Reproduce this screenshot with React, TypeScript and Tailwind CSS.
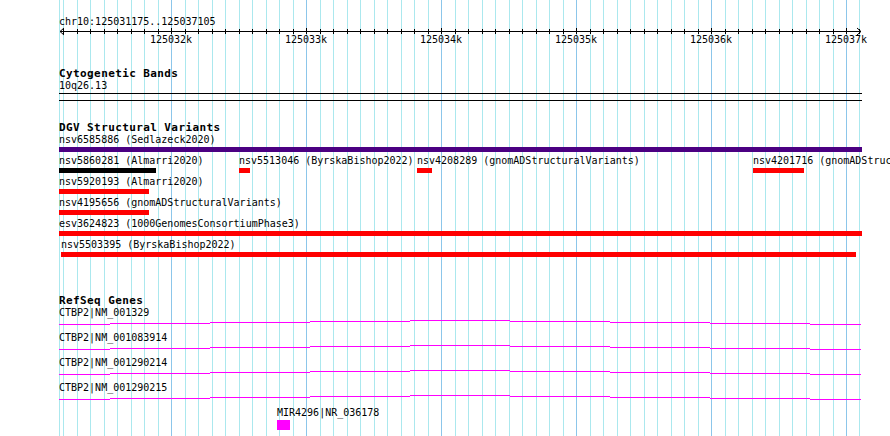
import React from "react";

// pixel positions of the 100bp grid (view starts at 125031175, 135px per kb)
const gridXs: { x: number; major: boolean }[] = [];
for (let k = 0; k < 60; k++) {
  gridXs.push({ x: Math.min(Math.floor(63.5 + 13.5 * k), 859), major: (k - 8) % 10 === 0 });
}

const majorTicks = [
  { x: 171, label: "125032k" },
  { x: 306, label: "125033k" },
  { x: 441, label: "125034k" },
  { x: 576, label: "125035k" },
  { x: 711, label: "125036k" },
  { x: 846, label: "125037k" },
];

type Feature = { name: string; start: number; end: number; color: string };

const dgvRows: Feature[][] = [
  [{ name: "nsv6585886 (Sedlazeck2020)", start: 59, end: 862, color: "bg-[#4b0082]" }],
  [
    { name: "nsv5860281 (Almarri2020)", start: 59, end: 156, color: "bg-black" },
    { name: "nsv5513046 (ByrskaBishop2022)", start: 239, end: 250, color: "bg-[#ff0000]" },
    { name: "nsv4208289 (gnomADStructuralVariants)", start: 417, end: 432, color: "bg-[#ff0000]" },
    { name: "nsv4201716 (gnomADStructuralVariants)", start: 753, end: 804, color: "bg-[#ff0000]" },
  ],
  [{ name: "nsv5920193 (Almarri2020)", start: 59, end: 149, color: "bg-[#ff0000]" }],
  [{ name: "nsv4195656 (gnomADStructuralVariants)", start: 59, end: 149, color: "bg-[#ff0000]" }],
  [{ name: "esv3624823 (1000GenomesConsortiumPhase3)", start: 59, end: 862, color: "bg-[#ff0000]" }],
  [{ name: "nsv5503395 (ByrskaBishop2022)", start: 61, end: 856, color: "bg-[#ff0000]" }],
];

const transcripts = ["CTBP2|NM_001329", "CTBP2|NM_001083914", "CTBP2|NM_001290214", "CTBP2|NM_001290215"];

// the intron "hat" line rises 1px every 100px toward the middle
const hatSegments = [
  [59, 110, 5],
  [110, 210, 4],
  [210, 310, 3],
  [310, 410, 2],
  [410, 510, 1],
  [510, 610, 2],
  [610, 710, 3],
  [710, 810, 4],
  [810, 861, 5],
];

function TrackTitle({ children, className = "" }: { children: React.ReactNode; className?: string }) {
  return (
    <div className={`pl-[59px] h-[12px] text-[11px] leading-[12px] font-bold tracking-[0.4px] whitespace-nowrap ${className}`}>
      {children}
    </div>
  );
}

function Ruler() {
  return (
    <div className="pt-[16px]">
      <div className="pl-[59px] h-[12px] whitespace-nowrap">chr10:125031175..125037105</div>
      <svg width={890} height={6} className="block overflow-visible" shapeRendering="crispEdges">
        <line x1={60} y1={3.5} x2={861} y2={3.5} stroke="#000" />
        {gridXs.map((g) => (
          <line key={g.x} x1={g.x + 0.5} y1={g.major ? 0 : 1} x2={g.x + 0.5} y2={6} stroke="#000" />
        ))}
        <polyline points="64,0 60,3.5 64,7" fill="none" stroke="#000" shapeRendering="auto" />
        <polyline points="857,0 861,3.5 857,7" fill="none" stroke="#000" shapeRendering="auto" />
      </svg>
      <div className="relative h-[12px]">
        {majorTicks.map((t) => (
          <span key={t.x} className="absolute top-0 whitespace-nowrap" style={{ left: t.x - 21 }}>
            {t.label}
          </span>
        ))}
      </div>
    </div>
  );
}

function DgvRow({ features }: { features: Feature[] }) {
  return (
    <div className="relative h-[21px]">
      {features.map((f) => (
        <div key={f.name} className="absolute top-0 flex flex-col" style={{ left: f.start }}>
          <span className="h-[12px] whitespace-nowrap">{f.name}</span>
          <div className={`mt-[1px] h-[5px] ${f.color}`} style={{ width: f.end - f.start }} />
        </div>
      ))}
    </div>
  );
}

function Transcript({ name }: { name: string }) {
  return (
    <div className="h-[25px]">
      <div className="pl-[59px] h-[12px] whitespace-nowrap">{name}</div>
      <svg width={890} height={13} className="block" shapeRendering="crispEdges">
        {hatSegments.map(([x1, x2, y]) => (
          <rect key={x1} x={x1} y={y} width={x2 - x1} height={1} fill="#ff00ff" />
        ))}
      </svg>
    </div>
  );
}

export default function App() {
  return (
    <div className="relative w-[890px] h-[436px] overflow-hidden bg-white text-black text-[10px] leading-[12px] font-['DejaVu_Sans_Mono',monospace]">
      {/* background grid */}
      <svg width={890} height={436} className="absolute inset-0" shapeRendering="crispEdges">
        <line x1={59.5} y1={0} x2={59.5} y2={436} stroke="#abe8ee" />
        {gridXs.map((g) => (
          <line key={g.x} x1={g.x + 0.5} y1={0} x2={g.x + 0.5} y2={436} stroke={g.major ? "#8cc6ea" : "#abe8ee"} />
        ))}
      </svg>

      <div className="relative">
        <Ruler />

        <TrackTitle className="mt-[22px]">Cytogenetic Bands</TrackTitle>
        <div className="pl-[59px] h-[12px]">10q26.13</div>
        <div className="ml-[59px] mt-[1px] w-[803px] h-[8px] border-y border-black" />

        <TrackTitle className="mt-[21px]">DGV Structural Variants</TrackTitle>
        {dgvRows.map((row, i) => (
          <DgvRow key={i} features={row} />
        ))}

        <TrackTitle className="mt-[35px]">RefSeq Genes</TrackTitle>
        {transcripts.map((t) => (
          <Transcript key={t} name={t} />
        ))}
        <div className="relative h-[25px]">
          <div className="absolute top-0 left-[277px] flex flex-col">
            <span className="h-[12px] whitespace-nowrap">MIR4296|NR_036178</span>
            <div className="mt-[1px] w-[13px] h-[10px] bg-[#ff00ff]" />
          </div>
        </div>
      </div>
    </div>
  );
}
